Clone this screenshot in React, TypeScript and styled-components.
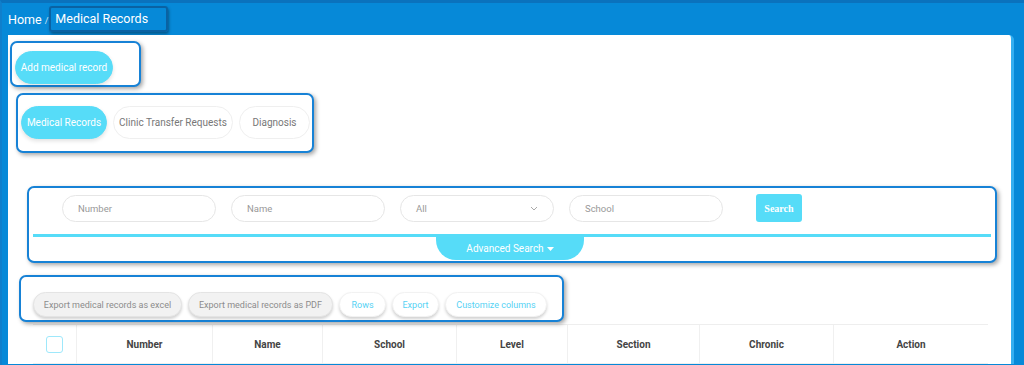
import styled, { createGlobalStyle } from 'styled-components'

const GlobalStyle = createGlobalStyle`
    html, body {
        margin: 0;
        padding: 0;
        background: #0689d8;
        font-family: Roboto, "Liberation Sans", sans-serif;
    }
    button {
        white-space: nowrap;
        cursor: pointer;
    }
`

const Frame = styled.div`
    width: 1024px;
    height: 365px;
    box-sizing: border-box;
    background: #0689d8;
    border-top: 3px solid #0a72bd;
    border-left: 2px solid #0f7fcc;
    display: flex;
    flex-direction: column;
    overflow: hidden;
`

const Crumbs = styled.div`
    flex: none;
    height: 32px;
    display: flex;
    align-items: center;
    padding-left: 6px;
    color: #fff;
    font-size: 12.5px;
`

const Slash = styled.span`
    font-size: 9px;
    margin: 3px 1px 0 3px;
    opacity: 0.8;
`

const Current = styled.span`
    padding: 3px 18px 4px 4px;
    border: 2px solid #0a62a3;
    border-radius: 3px;
    box-shadow: 1px 2px 3px rgba(0, 0, 0, 0.35);
`

const Card = styled.div`
    flex: 1;
    margin: 0 10px 3px 6px;
    background: #fff;
    border-radius: 0 5px 0 0;
    display: flex;
    flex-direction: column;
    align-items: flex-start;
    border-right: 3px solid #35aff0;
`

const Note = styled.div<{ $mt: number; $ml: number; $pad: string; $w: number }>`
    margin: ${p => p.$mt}px 0 0 ${p => p.$ml}px;
    padding: ${p => p.$pad};
    width: ${p => p.$w}px;
    box-sizing: border-box;
    border: 2px solid #1782d6;
    border-radius: 7px;
    box-shadow: 2px 2px 4px rgba(0, 0, 0, 0.35);
    background: #fff;
    position: relative;
    z-index: 1;
`

const Pill = styled.button<{ $active?: boolean; $w: number }>`
    width: ${p => p.$w}px;
    height: 33px;
    padding: 0;
    border-radius: 17px;
    border: 1px solid ${p => (p.$active ? '#56dcf8' : '#efefef')};
    background: ${p => (p.$active ? '#56dcf8' : '#fff')};
    color: ${p => (p.$active ? '#fff' : '#777')};
    font-family: Roboto, "Liberation Sans", sans-serif;
    font-size: 10px;
    box-shadow: ${p => (p.$active ? '0 2px 4px rgba(0,0,0,0.12)' : 'none')};
`

const Tabs = styled.div`
    display: flex;
    gap: 6px;
`

const SearchRow = styled.div`
    display: flex;
    align-items: center;
    padding-left: 33px;
    gap: 15px;
`

const Field = styled.div`
    width: 154px;
    height: 27px;
    box-sizing: border-box;
    border: 1px solid #e6e6e6;
    border-radius: 14px;
    padding: 0 15px;
    display: flex;
    align-items: center;
    justify-content: space-between;
    color: #999;
    font-size: 9.5px;
`

const SearchButton = styled.button`
    margin-left: 18px;
    width: 46px;
    height: 28px;
    border: none;
    border-radius: 3px;
    background: #56dcf8;
    color: #fff;
    font-family: "Liberation Serif", serif;
    font-size: 10px;
    font-weight: bold;
`

const Rule = styled.div`
    margin: 12px 4px 0;
    height: 3px;
    background: #56dcf8;
`

const Advanced = styled.div`
    margin: 0 auto;
    width: 148px;
    height: 23px;
    background: #56dcf8;
    border-radius: 0 0 20px 20px;
    color: #fff;
    font-size: 10px;
    display: flex;
    align-items: center;
    justify-content: center;
    gap: 3px;
    position: relative;
    left: -2px;
`

const Tools = styled.div`
    display: flex;
    gap: 6px;
`

const ToolButton = styled.button<{ $plain?: boolean; $w: number }>`
    width: ${p => p.$w}px;
    height: 25px;
    padding: 0;
    border-radius: 13px;
    border: 1px solid ${p => (p.$plain ? '#f2f2f2' : '#e4e4e4')};
    background: ${p => (p.$plain ? '#fff' : '#f2f2f2')};
    color: ${p => (p.$plain ? '#56d2f4' : '#8c8c8c')};
    font-family: Roboto, "Liberation Sans", sans-serif;
    font-size: 9px;
    box-shadow: 0 2px 3px rgba(0, 0, 0, 0.18);
`

const Table = styled.div`
    margin: 2px 0 0 25px;
    width: 955px;
    display: grid;
    grid-template-columns: 43px 136px 110px 134px 111px 132px 134px 155px;
    border-top: 1px solid #eee;
    border-bottom: 1px solid #eee;
`

const Head = styled.div`
    height: 38px;
    display: flex;
    align-items: center;
    justify-content: center;
    font-size: 10px;
    font-weight: bold;
    color: #444;
    border-left: 1px solid #f0f0f0;
    &:first-child {
        border-left: none;
    }
`

const Check = styled.span`
    width: 15px;
    height: 15px;
    border: 1px solid #9ee8fb;
    border-radius: 3px;
`

const Chevron = () => (
    <svg width="8" height="5" viewBox="0 0 8 5" fill="none">
        <path d="M1 1l3 3 3-3" stroke="#aaa" strokeWidth="1" />
    </svg>
)

const Caret = () => (
    <svg width="7" height="4" viewBox="0 0 7 4">
        <path d="M0 0h7L3.5 4z" fill="#fff" />
    </svg>
)

const columns = ['Number', 'Name', 'School', 'Level', 'Section', 'Chronic', 'Action']

export default function App() {
    return (
        <>
            <GlobalStyle />
            <Frame>
                <Crumbs>
                    Home<Slash>/</Slash>
                    <Current>Medical Records</Current>
                </Crumbs>
                <Card>
                    <Note $mt={6} $ml={2} $w={131} $pad="8px 0 1px 3px">
                        <Pill $active $w={98}>Add medical record</Pill>
                    </Note>
                    <Note $mt={6} $ml={8} $w={298} $pad="11px 0 12px 3px">
                        <Tabs>
                            <Pill $active $w={86}>Medical Records</Pill>
                            <Pill $w={120}>Clinic Transfer Requests</Pill>
                            <Pill $w={71}>Diagnosis</Pill>
                        </Tabs>
                    </Note>
                    <Note $mt={33} $ml={19} $w={970} $pad="6px 0 1px">
                        <SearchRow>
                            <Field>Number</Field>
                            <Field>Name</Field>
                            <Field>
                                All <Chevron />
                            </Field>
                            <Field>School</Field>
                            <SearchButton>Search</SearchButton>
                        </SearchRow>
                        <Rule />
                        <Advanced>
                            Advanced Search <Caret />
                        </Advanced>
                    </Note>
                    <Note $mt={12} $ml={11} $w={545} $pad="15px 12px 3px">
                        <Tools>
                            <ToolButton $w={149}>Export medical records as excel</ToolButton>
                            <ToolButton $w={145}>Export medical records as PDF</ToolButton>
                            <ToolButton $plain $w={47}>Rows</ToolButton>
                            <ToolButton $plain $w={47}>Export</ToolButton>
                            <ToolButton $plain $w={102}>Customize columns</ToolButton>
                        </Tools>
                    </Note>
                    <Table>
                        <Head>
                            <Check />
                        </Head>
                        {columns.map(c => (
                            <Head key={c}>{c}</Head>
                        ))}
                    </Table>
                </Card>
            </Frame>
        </>
    )
}
